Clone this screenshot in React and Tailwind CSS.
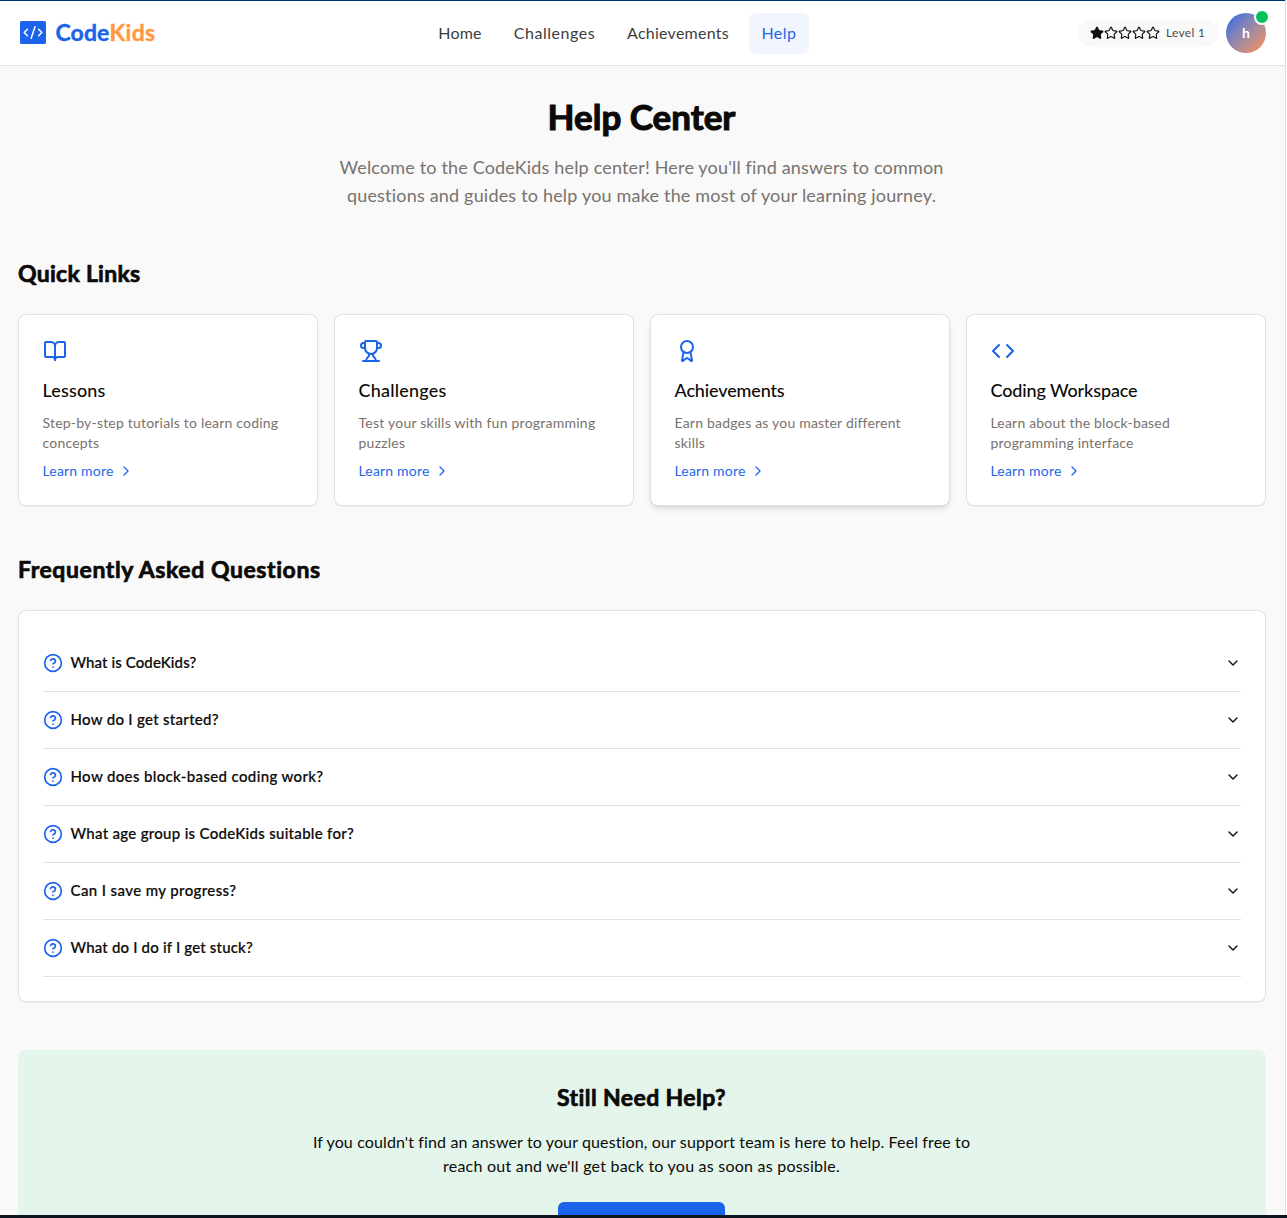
import React from 'react';
import {
  BookOpen,
  Trophy,
  Award,
  Code,
  ChevronRight,
  ChevronDown,
  CircleQuestionMark,
  Star,
} from 'lucide-react';

const navItems = [
  { label: 'Home', width: 'w-[68px]', tracking: 'tracking-[0.2px]' },
  { label: 'Challenges', width: 'w-[105px]', tracking: 'tracking-[0.55px]' },
  { label: 'Achievements', width: 'w-[126px]', tracking: 'tracking-[0.25px]' },
  { label: 'Help', width: 'w-[60px]', tracking: 'tracking-[0.5px]', active: true },
];

const links = [
  {
    icon: BookOpen,
    title: 'Lessons',
    titleTracking: 'tracking-[0.15px]',
    lines: ['Step-by-step tutorials to learn coding', 'concepts'],
    tracking: 'tracking-[0.2px]',
  },
  {
    icon: Trophy,
    title: 'Challenges',
    titleTracking: 'tracking-[0.21px]',
    lines: ['Test your skills with fun programming', 'puzzles'],
    tracking: 'tracking-[0.24px]',
  },
  {
    icon: Award,
    title: 'Achievements',
    titleTracking: 'tracking-[-0.14px]',
    lines: ['Earn badges as you master different', 'skills'],
    tracking: 'tracking-[0.2px]',
    raised: true,
  },
  {
    icon: Code,
    title: 'Coding Workspace',
    titleTracking: 'tracking-[-0.13px]',
    lines: ['Learn about the block-based', 'programming interface'],
    tracking: 'tracking-[0.19px]',
  },
];

const questions = [
  { text: 'What is CodeKids?', tracking: 'tracking-[0.1px]' },
  { text: 'How do I get started?', tracking: 'tracking-[0.3px]' },
  { text: 'How does block-based coding work?', tracking: 'tracking-[0.36px]' },
  { text: 'What age group is CodeKids suitable for?', tracking: 'tracking-[0.3px]' },
  { text: 'Can I save my progress?', tracking: 'tracking-[0.39px]' },
  { text: 'What do I do if I get stuck?', tracking: 'tracking-[0.18px]' },
];

function Header() {
  return (
    <header className="flex h-[66px] shrink-0 items-center border-t border-b border-t-[#003470] border-b-[#e2e2e2] bg-white pr-[19px] pl-5">
      <div className="flex w-[406px] shrink-0 items-center pb-0.5">
        <svg viewBox="0 0 26 23" className="h-[23px] w-[26px]" fill="none">
          <rect width="26" height="23" rx="1.5" fill="#1a63ea" />
          <path
            d="M7.4 8.2 4.2 11.5l3.2 3.3M18.6 8.2l3.2 3.3-3.2 3.3M15 5.8l-3.8 11.5"
            stroke="white"
            strokeWidth="1.5"
            strokeLinecap="round"
            strokeLinejoin="round"
          />
        </svg>
        <div className="ml-[9.5px] flex text-[23px] leading-8 font-bold whitespace-nowrap">
          <span className="tracking-[0.1px] text-[#1a63ea] [-webkit-text-stroke:0.4px_#1a63ea]">Code</span>
          <span className="tracking-[0.3px] text-[#ff983f] [-webkit-text-stroke:0.4px_#ff983f]">Kids</span>
        </div>
      </div>
      <nav className="flex shrink-0 gap-2">
        {navItems.map((n) => (
          <a
            key={n.label}
            className={`flex h-[41px] items-center justify-center rounded-md text-base whitespace-nowrap ${n.width} ${n.tracking} ${
              n.active ? 'bg-[#f1f6fe] text-[#2467e9]' : 'text-[#3d3d3d]'
            }`}
          >
            {n.label}
          </a>
        ))}
      </nav>
      <div className="flex flex-1 items-center justify-end gap-2">
        <div className="flex h-7 w-[140px] items-center rounded-full bg-[#f9f9f9] pl-3">
          {[0, 1, 2, 3, 4].map((i) => (
            <Star key={i} size={14} className="text-[#111]" fill={i === 0 ? '#111' : 'none'} />
          ))}
          <span className="ml-1.5 text-xs tracking-[0.3px] whitespace-nowrap text-[#4c4c4c]">Level 1</span>
        </div>
        <div className="relative flex size-10 items-center justify-center rounded-full bg-linear-to-br from-[#2165e6] to-[#ff9040] text-sm font-bold text-white">
          h
          <span className="absolute -top-1 -right-1 size-4 rounded-full border-2 border-white bg-[#05c158]" />
        </div>
      </div>
    </header>
  );
}

function LinkCard({ icon: Icon, title, titleTracking, lines, tracking, raised }) {
  return (
    <article
      className={`h-48 rounded-lg border border-[#e1e1e1] bg-white p-6 ${
        raised ? 'shadow-md' : 'shadow-xs'
      }`}
    >
      <Icon size={24} className="text-[#1a63ea]" />
      <h3 className={`mt-[15px] -ml-[0.5px] text-lg leading-6 font-medium whitespace-nowrap ${titleTracking}`}>
        {title}
      </h3>
      <p className={`mt-[11px] -ml-[0.5px] text-sm leading-5 whitespace-nowrap text-[#78726d] ${tracking}`}>
        {lines[0]}
        <br />
        {lines[1]}
      </p>
      <a className="mt-2 -ml-[0.5px] flex items-center text-sm leading-5 tracking-[0.18px] text-[#2467e9]">
        Learn more
        <ChevronRight size={16} className="ml-[5px]" />
      </a>
    </article>
  );
}

function SectionTitle({ children, className }) {
  return (
    <h2
      className={`h-8 text-[23px] leading-[31px] font-bold whitespace-nowrap [-webkit-text-stroke:0.7px_#0c0a09] ${className}`}
    >
      {children}
    </h2>
  );
}

export default function App() {
  return (
    <div className="flex h-screen flex-col overflow-hidden bg-white font-['Lato','Open_Sans',sans-serif] text-[#0c0a09]">
      <div className="mr-px flex min-h-0 flex-1 flex-col border-r border-[#dedede] bg-[#f9f9f9]">
        <Header />
        <main className="min-h-0 flex-1 overflow-hidden px-[18px] pt-8">
          <div className="mr-px">
            <section className="pr-px text-center">
              <h1 className="pb-1 text-[35px] leading-9 font-bold [-webkit-text-stroke:1.1px_#0c0a09]">Help Center</h1>
              <p className="mt-[15px] mb-[49px] text-lg leading-7 whitespace-nowrap text-[#78726d]">
                <span className="tracking-[0.165px]">
                  Welcome to the CodeKids help center! Here you'll find answers to common
                </span>
                <br />
                <span className="tracking-[0.19px]">
                  questions and guides to help you make the most of your learning journey.
                </span>
              </p>
            </section>

            <section>
              <SectionTitle className="tracking-[0.28px]">Quick Links</SectionTitle>
              <div className="mt-6 grid grid-cols-4 gap-4">
                {links.map((l) => (
                  <LinkCard key={l.title} {...l} />
                ))}
              </div>
            </section>

            <section className="mt-12">
              <SectionTitle className="tracking-[0.58px]">Frequently Asked Questions</SectionTitle>
              <div className="mt-6 rounded-lg border border-[#e1e1e1] bg-white p-6 shadow-xs">
                {questions.map((q) => (
                  <div key={q.text} className="flex h-[57px] items-center border-b border-[#e1e1e1]">
                    <CircleQuestionMark size={20} className="text-[#1a63ea]" />
                    <span
                      className={`ml-[7.5px] flex-1 pb-0.5 text-[15px] leading-6 font-medium [-webkit-text-stroke:0.2px_#0c0a09] ${q.tracking}`}
                    >
                      {q.text}
                    </span>
                    <ChevronDown size={16} />
                  </div>
                ))}
              </div>
            </section>

            <section className="mt-12 flex h-64 flex-col items-center rounded-lg bg-[#e4f5eb] pt-8 pr-px text-center">
              <SectionTitle className="tracking-[0.4px]">Still Need Help?</SectionTitle>
              <p className="mt-4 text-base leading-6 whitespace-nowrap">
                <span className="tracking-[0.125px]">
                  If you couldn't find an answer to your question, our support team is here to help. Feel free to
                </span>
                <br />
                <span className="tracking-[0.23px]">reach out and we'll get back to you as soon as possible.</span>
              </p>
              <div className="mt-6 h-10 w-[167px] rounded-md bg-[#1a63ea]" />
            </section>
          </div>
        </main>
      </div>
      <div className="h-[3px] shrink-0 bg-[#0d1520]" />
    </div>
  );
}
